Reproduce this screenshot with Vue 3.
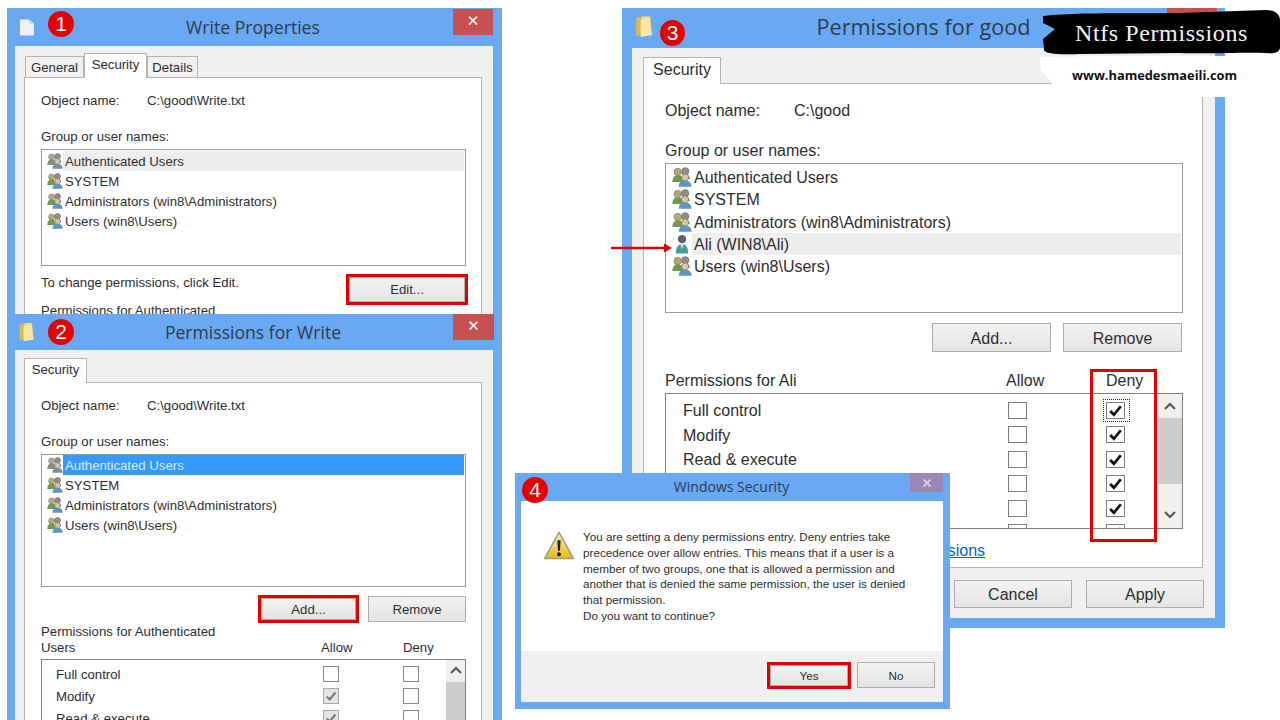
<script setup>
const users1 = ['Authenticated Users', 'SYSTEM', 'Administrators (win8\\Administrators)', 'Users (win8\\Users)']
const users3 = [
  { name: 'Authenticated Users', icon: '#ico-users' },
  { name: 'SYSTEM', icon: '#ico-users' },
  { name: 'Administrators (win8\\Administrators)', icon: '#ico-users' },
  { name: 'Ali (WIN8\\Ali)', icon: '#ico-user', active: true },
  { name: 'Users (win8\\Users)', icon: '#ico-users' },
]
const perms2 = [
  { name: 'Full control', allow: false },
  { name: 'Modify', allow: true },
  { name: 'Read & execute', allow: true },
]
const perms3 = ['Full control', 'Modify', 'Read & execute', 'List folder contents', 'Read', 'Write']
const warning = [
  'You are setting a deny permissions entry. Deny entries take',
  'precedence over allow entries. This means that if a user is a',
  'member of two groups, one that is allowed a permission and',
  'another that is denied the same permission, the user is denied',
  'that permission.',
  'Do you want to continue?',
]
</script>

<template>
  <div class="desktop">
    <svg class="defs" width="0" height="0">
      <defs>
        <symbol id="ico-users" viewBox="0 0 16 16">
          <circle cx="4.600" cy="4" r="3" fill="#b3a677" stroke="#7d7a58" stroke-width=".5" />
          <path d="M.3 12c0-3.600 1.700-5.400 4.300-5.400S9 8.400 9 12z" fill="#6f9a4a" />
          <circle cx="10.600" cy="3.400" r="2.900" fill="#8f8f87" stroke="#62625c" stroke-width=".5" />
          <path d="M7 8.500c.5-2 1.900-3 3.600-3s3.300 1.200 3.600 4H8z" fill="#66665e" />
          <circle cx="10.500" cy="8.400" r="2.800" fill="#d9c8a4" stroke="#8a7a5c" stroke-width=".5" />
          <path d="M5.400 15.800c0-3.300 2-5 5.100-5s5.100 1.700 5.100 5z" fill="#5d93c8" />
        </symbol>
        <symbol id="ico-user" viewBox="0 0 16 18">
          <circle cx="8" cy="4.600" r="3.800" fill="#59636d" />
          <path d="M2.500 17.500c0-5.500 2-8.500 5.500-8.500s5.500 3 5.500 8.500z" fill="#4a9a9c" />
          <path d="M6.400 9h3.200L8 13.500z" fill="#d6e4e4" />
        </symbol>
        <symbol id="ico-folder" viewBox="0 0 16 20">
          <path d="M1 2.500 6 1v16l-5 1.500z" fill="#d9b94f" />
          <path d="M6 1h7.500L15 17.500 6 19z" fill="#f2dc85" />
          <path d="M5 4 13 2.500 15 17.500 5 19z" fill="#f7e7a0" />
        </symbol>
      </defs>
    </svg>

    <!-- 3: permissions for good -->
    <section class="win win3">
      <header class="title">
        <svg class="folder3"><use href="#ico-folder" /></svg>
        <h2>Permissions for good</h2>
        <i class="close"></i>
      </header>
      <div class="panel">
        <div class="tabs"><span class="tab on">Security</span></div>
        <div class="pane">
          <div class="obj"><span class="k">Object name:</span><span>C:\good</span></div>
          <div class="lbl">Group or user names:</div>
          <ul class="list">
            <li v-for="u in users3" :key="u.name" :class="{ grey: u.active }">
              <svg class="uico"><use :href="u.icon" /></svg><span>{{ u.name }}</span>
            </li>
          </ul>
          <div class="btns">
            <button>Add...</button>
            <button>Remove</button>
          </div>
          <div class="head">
            <span class="hname">Permissions for Ali</span>
            <span class="hallow">Allow</span>
            <span>Deny</span>
          </div>
          <div class="table">
            <div class="rows">
              <div v-for="(p, i) in perms3" :key="p" class="row">
                <span>{{ p }}</span>
                <i class="cb"></i>
                <i class="cb" :class="{ focus: i === 0 }">
                  <svg viewBox="0 0 16 14"><path d="M3 7.500 6.500 11 13 3" fill="none" stroke="#111" stroke-width="2.600" /></svg>
                </i>
              </div>
            </div>
            <div class="scroll">
              <svg class="arr" viewBox="0 0 14 8"><path d="M2 7 7 2l5 5" fill="none" stroke="#555" stroke-width="2" /></svg>
              <div class="thumb"></div>
              <svg class="arr" viewBox="0 0 14 8"><path d="M2 1l5 5 5-5" fill="none" stroke="#555" stroke-width="2" /></svg>
            </div>
          </div>
          <a class="link">Learn about access control and permissions</a>
        </div>
        <div class="foot">
          <button>OK</button>
          <button>Cancel</button>
          <button>Apply</button>
        </div>
      </div>
    </section>

    <!-- 1: file properties, mostly hidden under window 2 -->
    <section class="win win1">
      <header class="title">
        <svg class="doc" viewBox="0 0 14 17"><path d="M0 1h9l5 4v12H0z" fill="#eef2f6" /><path d="M9 1v4h5z" fill="#c6d2de" /></svg>
        <h2>Write Properties</h2>
        <i class="close"></i>
      </header>
      <div class="panel">
        <div class="tabs">
          <span class="tab off">General</span>
          <span class="tab on">Security</span>
          <span class="tab off">Details</span>
        </div>
        <div class="pane">
          <div class="obj"><span class="k">Object name:</span><span>C:\good\Write.txt</span></div>
          <div class="lbl">Group or user names:</div>
          <ul class="list">
            <li v-for="(u, i) in users1" :key="u" :class="{ grey: i === 0 }">
              <svg class="uico"><use href="#ico-users" /></svg><span>{{ u }}</span>
            </li>
          </ul>
          <div class="change">
            <span>To change permissions, click Edit.</span>
            <button class="mark">Edit...</button>
          </div>
          <div class="cut">Permissions for Authenticated</div>
        </div>
      </div>
    </section>

    <!-- 2: permissions for write -->
    <section class="win win2">
      <header class="title">
        <svg class="folder2"><use href="#ico-folder" /></svg>
        <h2>Permissions for Write</h2>
        <i class="close"></i>
      </header>
      <div class="panel">
        <div class="tabs"><span class="tab on">Security</span></div>
        <div class="pane">
          <div class="obj"><span class="k">Object name:</span><span>C:\good\Write.txt</span></div>
          <div class="lbl">Group or user names:</div>
          <ul class="list">
            <li v-for="(u, i) in users1" :key="u" :class="{ sel: i === 0 }">
              <svg class="uico"><use href="#ico-users" /></svg><span>{{ u }}</span>
            </li>
          </ul>
          <div class="btns">
            <button class="mark">Add...</button>
            <button>Remove</button>
          </div>
          <div class="head">
            <span class="hname">Permissions for Authenticated<br />Users</span>
            <span class="hallow">Allow</span>
            <span>Deny</span>
          </div>
          <div class="table">
            <div class="rows">
              <div v-for="p in perms2" :key="p.name" class="row">
                <span>{{ p.name }}</span>
                <i class="cb" :class="{ dim: p.allow }">
                  <svg v-if="p.allow" viewBox="0 0 16 14"><path d="M3 7.500 6.500 11 13 3" fill="none" stroke="#777" stroke-width="2.400" /></svg>
                </i>
                <i class="cb"></i>
              </div>
            </div>
            <div class="scroll">
              <svg class="arr" viewBox="0 0 14 8"><path d="M2 7 7 2l5 5" fill="none" stroke="#555" stroke-width="2" /></svg>
              <div class="thumb"></div>
            </div>
          </div>
        </div>
      </div>
    </section>

    <!-- 4: deny warning -->
    <section class="win win4">
      <header class="title">
        <h2>Windows Security</h2>
        <i class="close">
          <svg viewBox="0 0 10 10"><path d="M1.500 1.500l7 7m0-7-7 7" stroke="#d8d0e2" stroke-width="1.800" /></svg>
        </i>
      </header>
      <div class="msg">
        <svg class="warn" viewBox="0 0 32 30">
          <defs>
            <linearGradient id="warn-fill" x1="0" y1="0" x2="0" y2="1">
              <stop offset="0" stop-color="#fdf3b0" />
              <stop offset="1" stop-color="#e9b90e" />
            </linearGradient>
          </defs>
          <path d="M16 1.500 31 28.500H1z" fill="url(#warn-fill)" stroke="#9c9c90" stroke-width="1.600" stroke-linejoin="round" />
          <path d="M14.300 9.500h3.400l-.7 11h-2z" fill="#1a1a1a" />
          <circle cx="16" cy="24" r="2" fill="#1a1a1a" />
        </svg>
        <div class="msg-text">
          <div v-for="l in warning" :key="l">{{ l }}</div>
        </div>
      </div>
      <div class="msg-foot">
        <button class="mark">Yes</button>
        <button>No</button>
      </div>
    </section>

    <!-- annotations drawn over the screenshots -->
    <span class="num n1">1</span>
    <span class="num n2">2</span>
    <span class="num n3">3</span>
    <span class="num n4">4</span>

    <div class="deny-mark"></div>

    <svg class="pointer" viewBox="0 0 62 10">
      <path d="M0 5h54" stroke="#e00000" stroke-width="2.400" />
      <path d="M53 .5 61 5l-8 4.500z" fill="#e00000" />
    </svg>

    <svg class="brush" viewBox="0 0 240 100">
      <path d="M0 47 68 46 185 46V87H2L12 73 1 60z" fill="#fff" />
      <path d="M3 6C40 2 90 4 140 3L226 0C234 0 240 4 240 10V37C240 42 236 44 226 43 200 42 180 44 140 43L40 44C20 45 5 44 4 40L3 29 15 19 3 13z" fill="#000" />
    </svg>
    <div class="brand">Ntfs Permissions</div>
    <div class="site">www.hamedesmaeili.com</div>
  </div>
</template>

<style>
body {
  margin: 0;
  background: #fff;
}
</style>

<style scoped>
.desktop {
  position: relative;
  width: 1280px;
  height: 720px;
  overflow: hidden;
  background: #fff;
  font-family: "Liberation Sans", Arial, sans-serif;
  color: #2e2e2e;
}
.defs {
  position: absolute;
}

/* window frames sit on a free canvas */
.win {
  position: absolute;
  box-sizing: border-box;
  overflow: hidden;
  background: #69a8f3;
  display: flex;
  flex-direction: column;
}
.win1 {
  left: 7px;
  top: 8px;
  width: 495px;
  height: 306px;
  font-size: 13.200px;
}
.win2 {
  left: 7px;
  top: 314px;
  width: 495px;
  height: 406px;
  font-size: 13.200px;
}
.win3 {
  left: 622px;
  top: 8px;
  width: 603px;
  height: 620px;
  font-size: 16px;
}
.win4 {
  left: 515px;
  top: 473px;
  width: 435px;
  height: 236px;
  font-size: 11.700px;
}

.title {
  position: relative;
  flex: none;
  display: flex;
  align-items: center;
  justify-content: center;
}
.title h2 {
  margin: 0;
  font-family: "Open Sans", sans-serif;
  font-weight: 400;
  color: #2f3b4c;
}
.win1 .title {
  height: 38px;
}
.win1 .title h2 {
  font-size: 17.600px;
  margin: 0 3px 0 0;
}
.win2 .title {
  height: 36px;
}
.win2 .title h2 {
  font-size: 17.600px;
  margin: -1px 3px 0 0;
}
.win3 .title {
  height: 40px;
}
.win3 .title h2 {
  font-size: 21.700px;
  margin-top: -3px;
}
.win4 .title {
  height: 27px;
}
.win4 .title h2 {
  font-size: 14px;
  margin: -1px 0 0 -2px;
}

.close {
  position: absolute;
  top: 1px;
  right: 9px;
  width: 40px;
  height: 26px;
  background: #c75050;
  display: flex;
  align-items: center;
  justify-content: center;
}
.win1 .close::before,
.win2 .close::before {
  content: "✕";
  color: #fff;
  font-size: 15px;
  line-height: 22px;
  margin-top: -2px;
  font-weight: 700;
  font-family: "DejaVu Sans", sans-serif;
}
.win2 .close {
  top: 0;
  width: 41px;
  right: 8px;
}
.win3 .close {
  top: 0;
  width: 50px;
  right: 8px;
}
.win4 .close {
  top: 0;
  right: 7px;
  width: 33px;
  height: 19px;
  background: #9b87b4;
}
.win4 .close svg {
  width: 10px;
  height: 10px;
}

.doc {
  position: absolute;
  left: 13px;
  top: 10px;
  width: 14px;
  height: 18px;
}
.folder2 {
  position: absolute;
  left: 11px;
  top: 8px;
  width: 17px;
  height: 20px;
}
.folder3 {
  position: absolute;
  left: 13px;
  top: 7px;
  width: 18px;
  height: 23px;
}

.panel {
  flex: 1;
  min-height: 0;
  background: #f0f0f0;
  margin-left: 8px;
  margin-right: 9px;
  padding-right: 11px;
  padding-left: 9px;
}
.win3 .panel {
  margin: 0 10px 10px;
  padding-left: 11px;
  padding-right: 12px;
}

.tabs {
  display: flex;
  align-items: flex-end;
  padding-top: 8px;
  height: 23px;
}
.win2 .tabs {
  height: 24px;
}
.win3 .tabs {
  height: 26px;
  padding-top: 9px;
}
.tab {
  box-sizing: border-box;
  text-align: center;
  border: 1px solid #b4b4b4;
  border-bottom: 0;
}
.tab.on {
  background: #fff;
  height: 25px;
  margin-bottom: -1px;
  position: relative;
  line-height: 22px;
  width: 63px;
}
.win1 .tab.off {
  height: 21px;
  line-height: 21px;
  background: #f0f0f0;
}
.win1 .tab.off:first-child {
  width: 59px;
  margin-left: 1px;
}
.win1 .tab.off:last-child {
  width: 51px;
}
.win3 .tab.on {
  width: 78px;
  height: 27px;
  line-height: 23px;
}

.pane {
  background: #fff;
  border: 1px solid #b4b4b4;
  padding: 15px 15px 0 16px;
  box-sizing: border-box;
  height: 600px;
}
.win3 .pane {
  height: 485px;
  padding: 18px 19px 0 21px;
}

.obj {
  display: flex;
  line-height: 16px;
}
.obj .k {
  width: 106px;
}
.win3 .obj {
  line-height: 18px;
}
.win3 .obj .k {
  width: 129px;
}
.lbl {
  margin-top: 20px;
  line-height: 16px;
}
.win3 .lbl {
  margin-top: 22px;
  line-height: 18px;
}

.list {
  list-style: none;
  margin: 4px 0 0;
  padding: 1px;
  width: 425px;
  height: 117px;
  box-sizing: border-box;
  border: 1px solid #999;
}
.win2 .list {
  height: 133px;
  padding-top: 0;
}
.win3 .list {
  width: 518px;
  height: 150px;
  margin-top: 3px;
  padding: 2px 1px;
}
.list li {
  display: flex;
  align-items: center;
  height: 20px;
}
.win3 .list li {
  height: 22.300px;
}
.list li span {
  flex: 1;
  align-self: stretch;
  display: flex;
  align-items: center;
  padding-left: 2px;
  white-space: nowrap;
}
.uico {
  flex: none;
  width: 16px;
  height: 16px;
  margin-left: 4px;
}
.win3 .uico {
  width: 20px;
  height: 20px;
  margin-left: 5px;
}
.win3 .list li span {
  padding-left: 2px;
  padding-top: 2px;
  box-sizing: border-box;
}
.list li.grey span {
  background: #eee;
}
.win1 .list li.grey .uico {
  filter: saturate(.4);
}
.list li.sel span {
  background: #3399ff;
  color: #dcecff;
}
.list li.sel .uico {
  filter: saturate(.3);
}

button {
  box-sizing: border-box;
  padding: 0;
  font: inherit;
  color: #2e2e2e;
  background: linear-gradient(#f2f2f2, #e4e4e4);
  border: 1px solid #adadad;
}
.win3 button {
  padding-top: 2px;
}
.mark {
  outline: 3px solid #e00000;
  outline-offset: 0;
}

.change {
  display: flex;
  justify-content: space-between;
  margin-top: 11px;
  height: 25px;
}
.change span {
  margin-top: -2px;
  line-height: 16px;
}
.change button {
  width: 116px;
  margin-right: 1px;
}
.cut {
  margin-top: 1px;
  line-height: 16px;
}

.btns {
  display: flex;
  justify-content: flex-end;
  align-items: center;
  gap: 12px;
  width: 425px;
  height: 26px;
  margin-top: 9px;
}
.btns button {
  width: 98px;
  height: 26px;
}
.btns button.mark {
  width: 95px;
  height: 22px;
}
.win3 .btns {
  width: 517px;
  height: 29px;
  margin-top: 10px;
}
.win3 .btns button {
  width: 119px;
  height: 29px;
}

.head {
  display: flex;
  align-items: flex-end;
  margin-top: 2px;
  height: 32px;
  line-height: 16px;
}
.hname {
  width: 280px;
}
.hallow {
  width: 82px;
}
.win3 .head {
  margin-top: 20px;
  height: 18px;
  line-height: 18px;
}
.win3 .hname {
  width: 341px;
}
.win3 .hallow {
  width: 100px;
}

.table {
  display: flex;
  width: 425px;
  height: 200px;
  margin-top: 3px;
  box-sizing: border-box;
  border: 1px solid #808080;
  overflow: hidden;
}
.win3 .table {
  width: 518px;
  height: 136px;
  margin-top: 3px;
}
.rows {
  flex: 1;
  padding-top: 3px;
}
.win3 .rows {
  padding-top: 4px;
}
.row {
  display: grid;
  grid-template-columns: 267px 80px 1fr;
  align-items: center;
  height: 22px;
  padding-left: 14px;
}
.win3 .row {
  grid-template-columns: 325px 98px 1fr;
  height: 24.500px;
  padding-left: 17px;
}
.win3 .row span {
  padding-top: 2px;
}
.cb {
  position: relative;
  box-sizing: border-box;
  display: block;
  width: 16px;
  height: 16px;
  border: 1px solid #8a8a8a;
  background: #fff;
}
.cb.dim {
  background: #e4e4e4;
  border-color: #a8a8a8;
}
.cb svg {
  display: block;
  width: 100%;
  height: 100%;
}
.win3 .cb {
  width: 19px;
  height: 17px;
  border-color: #7c7c7c;
}
.cb.focus::after {
  content: "";
  position: absolute;
  left: -4px;
  top: -4px;
  width: 25px;
  height: 21px;
  border: 1px dotted #222;
}
.scroll {
  flex: none;
  width: 19px;
  margin-right: 0;
  background: #f0f0f0;
  display: flex;
  flex-direction: column;
  align-items: center;
}
.win3 .scroll {
  width: 24px;
}
.arr {
  flex: none;
  width: 14px;
  height: 8px;
  margin: 6px 0 8px;
}
.thumb {
  align-self: stretch;
  height: 66px;
  background: #cdcdcd;
}
.win3 .scroll .arr:last-child {
  margin: 27px 0 0;
}
.win3 .arr {
  margin: 8px 0 8px;
}

.link {
  display: block;
  margin-top: 13px;
  padding-left: 7px;
  line-height: 18px;
  color: #0066cc;
  text-decoration: underline;
}
.foot {
  display: flex;
  justify-content: flex-end;
  gap: 14px;
  margin: 12px -1px 0 0;
}
.foot button {
  width: 118px;
  height: 28px;
}

.msg {
  flex: none;
  display: flex;
  gap: 8px;
  height: 150px;
  box-sizing: border-box;
  margin: 1px 7px 0 6px;
  padding: 28px 0 0 22px;
  background: #fff;
}
.warn {
  flex: none;
  width: 32px;
  height: 29px;
  margin-top: 2px;
}
.msg-text {
  line-height: 15.800px;
  white-space: nowrap;
}
.msg-foot {
  flex: none;
  display: flex;
  justify-content: flex-end;
  align-items: center;
  gap: 9px;
  box-sizing: border-box;
  height: 51px;
  margin: 0 7px 0 6px;
  padding: 0 8px 3px 0;
  background: #f0f0f0;
}
.msg-foot button {
  width: 78px;
  height: 26px;
}
.msg-foot .mark {
  height: 21px;
}

/* numbered badges and tutorial marks lie over the windows */
.num {
  position: absolute;
  width: 26px;
  height: 26px;
  border-radius: 50%;
  background: #e60000;
  color: #fff;
  font-size: 21px;
  line-height: 26px;
  text-align: center;
}
.n1 {
  left: 48px;
  top: 11px;
}
.n2 {
  left: 48px;
  top: 319px;
}
.n3 {
  left: 660px;
  top: 20px;
  width: 25px;
}
.n4 {
  left: 522px;
  top: 477px;
}
.deny-mark {
  position: absolute;
  left: 1090px;
  top: 369px;
  width: 67px;
  height: 173px;
  box-sizing: border-box;
  border: 3px solid #e00000;
}
.pointer {
  position: absolute;
  left: 611px;
  top: 243px;
  width: 62px;
  height: 10px;
}
.brush {
  position: absolute;
  left: 1040px;
  top: 10px;
  width: 240px;
  height: 100px;
}
.brand {
  position: absolute;
  left: 1075px;
  top: 18px;
  color: #f4f4f4;
  font-family: "Liberation Serif", serif;
  font-size: 24px;
  letter-spacing: .6px;
  line-height: 30px;
  white-space: nowrap;
}
.site {
  position: absolute;
  left: 1072px;
  top: 66px;
  color: #111;
  font-family: "Open Sans", sans-serif;
  font-weight: 700;
  font-size: 12.800px;
  line-height: 18px;
  white-space: nowrap;
}
</style>
